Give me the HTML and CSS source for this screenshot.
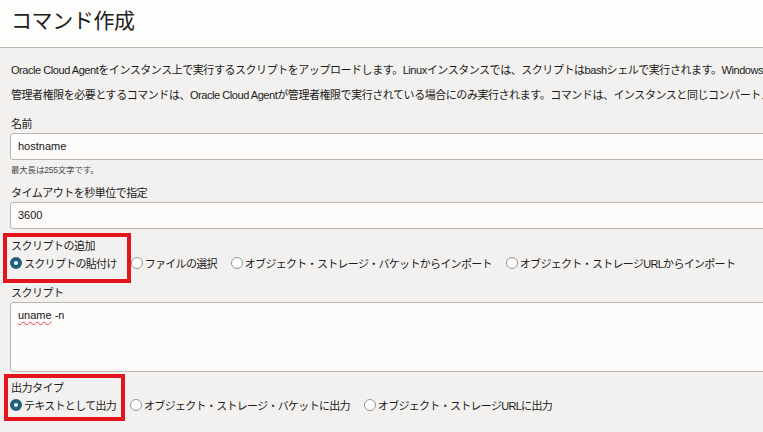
FILE: index.html
```html
<!DOCTYPE html>
<html lang="ja">
<head>
<meta charset="utf-8">
<title>コマンド作成</title>
<link rel="stylesheet" href="styles.css">
</head>
<body>
<div class="page">
  <header class="header">
    <h1 class="title">コマンド作成</h1>
  </header>
  <main class="content">
    <div class="desc">
      <p>Oracle Cloud Agentをインスタンス上で実行するスクリプトをアップロードします。Linuxインスタンスでは、スクリプトはbashシェルで実行されます。Windowsインスタンスでは、スクリプトはPowerShellで実行されます。</p>
      <p>管理者権限を必要とするコマンドは、Oracle Cloud Agentが管理者権限で実行されている場合にのみ実行されます。コマンドは、インスタンスと同じコンパートメントに作成されます。</p>
    </div>

    <div class="label label-first">名前</div>
    <div class="input">hostname</div>
    <div class="hint">最大長は255文字です。</div>

    <div class="label label-gap">タイムアウトを秒単位で指定</div>
    <div class="input">3600</div>

    <div class="label label-gap">スクリプトの追加</div>
    <div class="radios">
      <span class="opt"><span class="radio on"></span>スクリプトの貼付け</span>
      <span class="opt"><span class="radio"></span>ファイルの選択</span>
      <span class="opt"><span class="radio"></span>オブジェクト・ストレージ・バケットからインポート</span>
      <span class="opt"><span class="radio"></span>オブジェクト・ストレージURLからインポート</span>
    </div>

    <div class="label label-script">スクリプト</div>
    <div class="textarea"><span class="spell">uname</span> -n</div>

    <div class="label label-out">出力タイプ</div>
    <div class="radios">
      <span class="opt"><span class="radio on"></span>テキストとして出力</span>
      <span class="opt"><span class="radio"></span>オブジェクト・ストレージ・バケットに出力</span>
      <span class="opt"><span class="radio"></span>オブジェクト・ストレージURLに出力</span>
    </div>
  </main>
  <div class="mark mark-1"></div>
  <div class="mark mark-2"></div>
</div>
</body>
</html>
```
FILE: styles.css
```css
html, body {
  margin: 0;
  padding: 0;
}
body {
  width: 763px;
  height: 432px;
  overflow: hidden;
  background: #f2f1ef;
  font-family: "Liberation Sans", "Noto Sans CJK JP", sans-serif;
  color: #1d1b19;
}
.page {
  position: relative;
  width: 763px;
  height: 432px;
  overflow: hidden;
}
.header {
  height: 47px;
  background: #fdfdfc;
  border-bottom: 1px solid #bab5ae;
}
.title {
  margin: 0;
  padding: 7px 0 0 11px;
  font-size: 21px;
  line-height: 28px;
  font-weight: normal;
  letter-spacing: -0.4px;
  color: #232120;
}
.content {
  width: 900px;
  padding-left: 10px;
  font-size: 11px;
  letter-spacing: -0.5px;
}
.desc {
  padding: 10px 0 0 1px;
}
.desc p {
  margin: 0;
  line-height: 25px;
  white-space: nowrap;
  letter-spacing: -0.45px;
}
.label {
  line-height: 16px;
  padding-left: 1px;
  margin-bottom: 1px;
}
.label-first { margin-top: 8px; }
.label-gap { margin-top: 9px; }
.label-script { margin-top: 14px; }
.label-out { margin-top: 8px; }
.input {
  height: 25px;
  line-height: 25px;
  background: #fcfbfa;
  border: 1px solid #bbb6b0;
  border-radius: 3px;
  padding-left: 7px;
  letter-spacing: 0;
  color: #161513;
}
.hint {
  margin-top: 4px;
  font-size: 8.5px;
  line-height: 12px;
  letter-spacing: -0.2px;
  color: #4a4745;
  padding-left: 1px;
}
.radios {
  display: flex;
  gap: 14px;
  height: 16px;
  align-items: center;
  white-space: nowrap;
  letter-spacing: -0.7px;
}
.opt {
  display: flex;
  align-items: center;
  gap: 2px;
}
.radio {
  box-sizing: border-box;
  width: 12px;
  height: 12px;
  border-radius: 50%;
  border: 1px solid #9a9591;
  background: #fff;
  flex: none;
}
.radio.on {
  border: 4px solid #22607b;
  background: #fff;
}
.textarea {
  box-sizing: border-box;
  height: 70px;
  background: #fcfbfa;
  border: 1px solid #bbb6b0;
  border-radius: 3px;
  padding: 4px 7px;
  line-height: 16px;
  letter-spacing: 0;
  color: #161513;
}
.spell {
  text-decoration: underline wavy #e0434a;
  text-decoration-thickness: 1px;
  text-underline-offset: 2px;
}
.mark {
  position: absolute;
  box-sizing: border-box;
  border: 4px solid #e3151e;
}
.mark-1 {
  left: 3px;
  top: 233px;
  width: 128px;
  height: 50px;
}
.mark-2 {
  left: 4px;
  top: 374px;
  width: 121px;
  height: 47px;
}
```
